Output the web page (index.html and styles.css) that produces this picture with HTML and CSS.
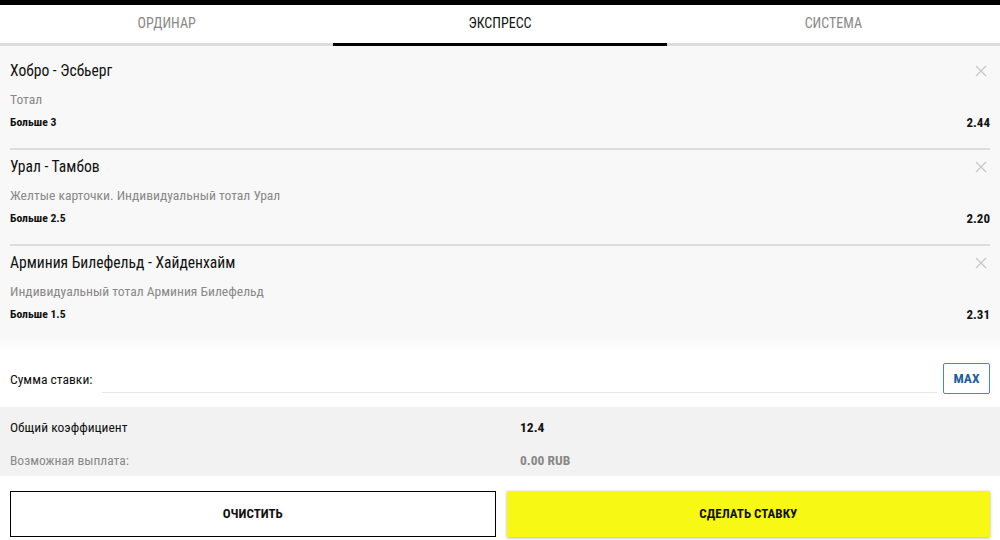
FILE: index.html
```html
<!DOCTYPE html>
<html lang="ru">

<head>
    <meta charset="UTF-8">
    <meta name="viewport" content="width=device-width, initial-scale=1.0">
    <title>Купон</title>
    <link rel="stylesheet" href="styles.css">
</head>

<body>
    <div class="wrap">
        <div class="topBar"></div>

        <div class="tabs">
            <div class="tab">ОРДИНАР</div>
            <div class="tab active">ЭКСПРЕСС</div>
            <div class="tab">СИСТЕМА</div>
        </div>

        <div class="betList">
            <div class="betItem">
                <div class="betHead">
                    <div class="betTitle">Хобро - Эсбьерг</div>
                    <svg class="betClose" width="12" height="12" viewBox="0 0 12 12"><path d="M1 1L11 11M11 1L1 11" /></svg>
                </div>
                <div class="betMarket">Тотал</div>
                <div class="betRow">
                    <div class="betOutcome">Больше 3</div>
                    <div class="betOdds">2.44</div>
                </div>
            </div>
            <div class="betItem">
                <div class="betHead">
                    <div class="betTitle">Урал - Тамбов</div>
                    <svg class="betClose" width="12" height="12" viewBox="0 0 12 12"><path d="M1 1L11 11M11 1L1 11" /></svg>
                </div>
                <div class="betMarket">Желтые карточки. Индивидуальный тотал Урал</div>
                <div class="betRow">
                    <div class="betOutcome">Больше 2.5</div>
                    <div class="betOdds">2.20</div>
                </div>
            </div>
            <div class="betItem">
                <div class="betHead">
                    <div class="betTitle">Арминия Билефельд - Хайденхайм</div>
                    <svg class="betClose" width="12" height="12" viewBox="0 0 12 12"><path d="M1 1L11 11M11 1L1 11" /></svg>
                </div>
                <div class="betMarket">Индивидуальный тотал Арминия Билефельд</div>
                <div class="betRow">
                    <div class="betOutcome">Больше 1.5</div>
                    <div class="betOdds">2.31</div>
                </div>
            </div>
        </div>

        <div class="stake">
            <div class="stakeLabel">Сумма ставки:</div>
            <div class="stakeInput"></div>
            <div class="maxBtn">MAX</div>
        </div>

        <div class="summary">
            <div class="sumRow">
                <div class="sumLabel">Общий коэффициент</div>
                <div class="sumValue">12.4</div>
            </div>
            <div class="sumRow muted">
                <div class="sumLabel">Возможная выплата:</div>
                <div class="sumValue">0.00 RUB</div>
            </div>
        </div>

        <div class="actions">
            <div class="btn clear">ОЧИСТИТЬ</div>
            <div class="btn place">СДЕЛАТЬ СТАВКУ</div>
        </div>
    </div>
</body>

</html>
```

FILE: styles.css
```css
* {
    margin: 0;
    padding: 0;
    box-sizing: border-box;
}

html,
body,
.wrap {
    width: 100%;
    height: 100%;
}

body {
    font-family: "Roboto Condensed", "Liberation Sans Narrow", Roboto, sans-serif;
    color: #111;
    background-color: #fff;
}

.topBar {
    height: 5px;
    background-color: #000;
}

.tabs {
    display: flex;
    height: 41px;
    background-color: #fff;
}

.tab {
    flex: 1;
    padding-top: 10px;
    text-align: center;
    font-size: 14px;
    color: #888;
    border-bottom: 3px solid #ddd;
}

.tab.active {
    color: #111;
    border-bottom-color: #000;
}

.betList {
    height: 304px;
    padding: 8px 10px 0;
    background: linear-gradient(to bottom, #f8f8f8 calc(100% - 12px), #fff);
}

.betItem {
    height: 96px;
    padding-top: 7px;
    border-bottom: 2px solid #ddd;
}

.betItem:last-child {
    border-bottom: none;
}

.betHead {
    display: flex;
    justify-content: space-between;
    align-items: center;
    height: 20px;
}

.betTitle {
    font-size: 15.6px;
}

.betClose {
    margin-right: 3px;
    stroke: #c8c8c8;
    stroke-width: 1.3;
    fill: none;
}

.betMarket {
    margin-top: 10px;
    height: 16px;
    line-height: 16px;
    font-size: 13.6px;
    color: #888;
}

.betRow {
    display: flex;
    justify-content: space-between;
    align-items: center;
    height: 14px;
    margin-top: 8px;
    font-size: 11.7px;
    font-weight: bold;
}

.betOdds {
    font-size: 13px;
}

.stake {
    display: flex;
    align-items: center;
    height: 57px;
    padding: 0 10px;
}

.stakeLabel {
    width: 92px;
    font-size: 13.6px;
}

.stakeInput {
    flex: 1;
    height: 28px;
    margin-right: 6px;
    border-bottom: 1px solid #e6e6e6;
}

.maxBtn {
    width: 47px;
    height: 31px;
    line-height: 29px;
    text-align: center;
    font-size: 13.5px;
    font-weight: bold;
    color: #1b5e9e;
    border: 1px solid #4a86c5;
    border-radius: 2px;
}

.summary {
    height: 69px;
    padding: 3px 10px 0;
    background-color: #f2f2f2;
}

.sumRow {
    display: flex;
    height: 33px;
    align-items: center;
    font-size: 13.5px;
}

.sumLabel {
    width: 510px;
}

.sumValue {
    font-weight: bold;
}

.sumRow.muted {
    color: #888;
}

.actions {
    display: flex;
    gap: 11px;
    padding: 15px 10px 0;
}

.btn {
    flex: 1;
    height: 46px;
    line-height: 46px;
    text-align: center;
    font-size: 13px;
    font-weight: bold;
}

.btn.clear {
    border: 1px solid #000;
    line-height: 44px;
}

.btn.place {
    background-color: #f8f815;
    box-shadow: 0 1px 3px rgba(0, 0, 0, 0.3);
}
```
